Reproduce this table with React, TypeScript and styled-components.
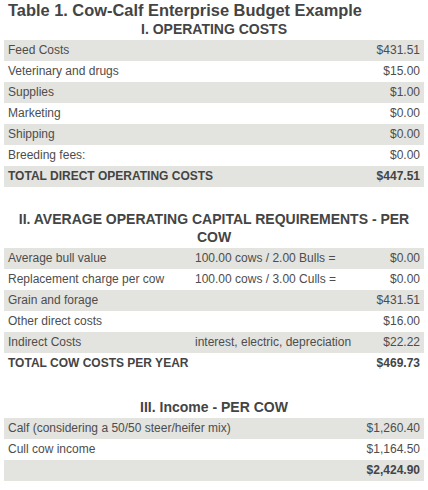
import React from "react";
import styled, { createGlobalStyle } from "styled-components";

const Global = createGlobalStyle`
  html, body { margin: 0; padding: 0; background: #ffffff; }
  body { font-family: "Liberation Sans", Arial, sans-serif; color: #4d4d4d; }
`;

const Page = styled.div`
  width: 420px;
  padding: 0 4px;
`;

const Title = styled.h1`
  margin: 0;
  padding-left: 4px;
  font-size: 16.4px;
  line-height: 20px;
  font-weight: bold;
  color: #444444;
`;

const Section = styled.section<{ $top: number }>`
  margin-top: ${(p) => p.$top}px;
`;

const Heading = styled.h2`
  margin: 0 0 2px;
  font-size: 14px;
  line-height: 18px;
  font-weight: bold;
  text-align: center;
  color: #444444;
`;

const Row = styled.div<{ $cols: string }>`
  display: grid;
  grid-template-columns: ${(p) => p.$cols};
  height: 21px;
  font-size: 12px;
  line-height: 21px;
  &:nth-child(odd) { background: #e3e3df; }
  &:nth-child(even) { background: #ffffff; }
`;

const Cell = styled.div<{ $right?: boolean; $bold?: boolean }>`
  padding: 0 4px;
  white-space: nowrap;
  text-align: ${(p) => (p.$right ? "right" : "left")};
  font-weight: ${(p) => (p.$bold ? "bold" : "normal")};
  color: ${(p) => (p.$bold ? "#444444" : "#4d4d4d")};
`;

type Line = { label: string; mid?: string; value: string; bold?: boolean };

const sec1: Line[] = [
  { label: "Feed Costs", value: "$431.51" },
  { label: "Veterinary and drugs", value: "$15.00" },
  { label: "Supplies", value: "$1.00" },
  { label: "Marketing", value: "$0.00" },
  { label: "Shipping", value: "$0.00" },
  { label: "Breeding fees:", value: "$0.00" },
  { label: "TOTAL DIRECT OPERATING COSTS", value: "$447.51", bold: true },
];

const sec2: Line[] = [
  { label: "Average bull value", mid: "100.00 cows / 2.00 Bulls =", value: "$0.00" },
  { label: "Replacement charge per cow", mid: "100.00 cows / 3.00 Culls =", value: "$0.00" },
  { label: "Grain and forage", mid: "", value: "$431.51" },
  { label: "Other direct costs", mid: "", value: "$16.00" },
  { label: "Indirect Costs", mid: "interest, electric, depreciation", value: "$22.22" },
  { label: "TOTAL COW COSTS PER YEAR", mid: "", value: "$469.73", bold: true },
];

const sec3: Line[] = [
  { label: "Calf (considering a 50/50 steer/heifer mix)", value: "$1,260.40" },
  { label: "Cull cow income", value: "$1,164.50" },
  { label: "", value: "$2,424.90", bold: true },
];

const Table: React.FC<{ rows: Line[]; cols: string; three?: boolean }> = ({ rows, cols, three }) => (
  <div>
    {rows.map((r, i) => (
      <Row key={i} $cols={cols}>
        <Cell $bold={r.bold}>{r.label}</Cell>
        {three && <Cell>{r.mid}</Cell>}
        <Cell $right $bold={r.bold}>{r.value}</Cell>
      </Row>
    ))}
  </div>
);

export default function App() {
  return (
    <Page>
      <Global />
      <Title>Table 1. Cow-Calf Enterprise Budget Example</Title>
      <Section $top={0}>
        <Heading>I. OPERATING COSTS</Heading>
        <Table rows={sec1} cols="1fr auto" />
      </Section>
      <Section $top={23}>
        <Heading>II. AVERAGE OPERATING CAPITAL REQUIREMENTS - PER COW</Heading>
        <Table rows={sec2} cols="187px 166px 1fr" three />
      </Section>
      <Section $top={24}>
        <Heading>III. Income - PER COW</Heading>
        <Table rows={sec3} cols="1fr auto" />
      </Section>
    </Page>
  );
}
